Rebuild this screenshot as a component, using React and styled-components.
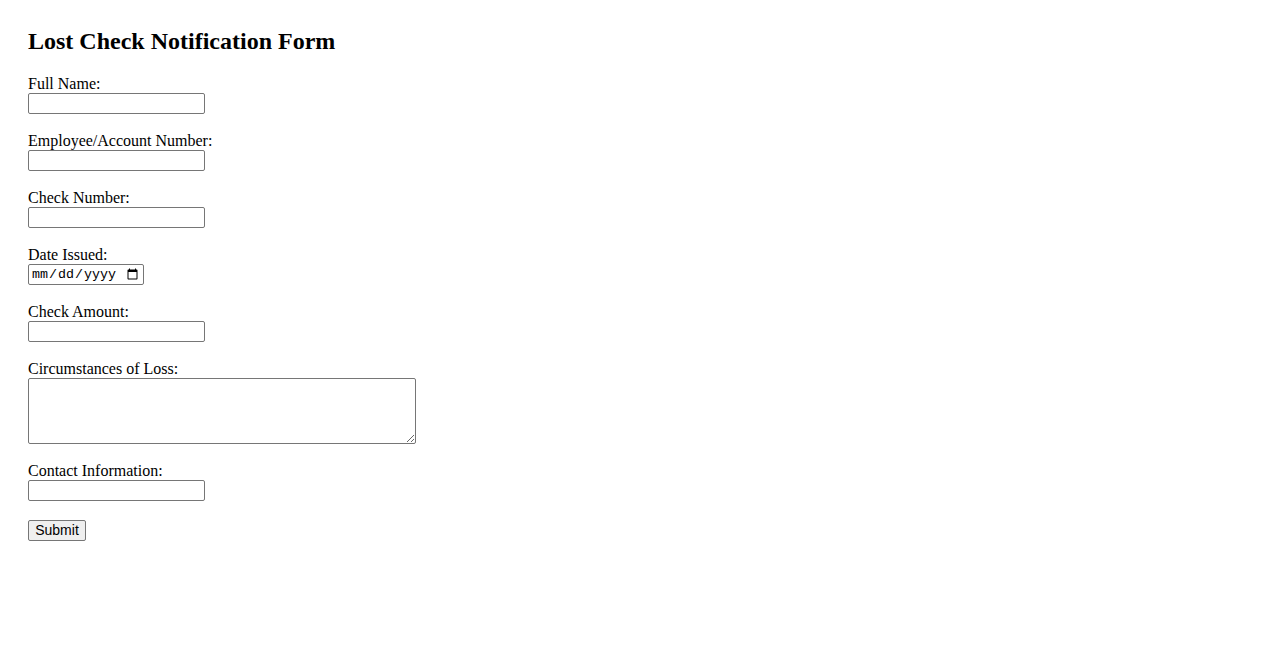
import React from 'react';
import styled, { createGlobalStyle } from 'styled-components';

const GlobalStyle = createGlobalStyle`
    body {
        margin: 8px;
        background: #ffffff;
        color: #000000;
        font-family: "Liberation Serif", "Times New Roman", serif;
        font-size: 16px;
    }
`;

const Page = styled.div`
    padding: 20px;
`;

const Title = styled.h2`
    margin: 0 0 19.92px;
    font-size: 24px;
    font-weight: 700;
    line-height: normal;
`;

const Form = styled.form`
    display: flex;
    flex-direction: column;
    align-items: flex-start;
`;

const Field = styled.div`
    display: flex;
    flex-direction: column;
    align-items: flex-start;
    margin-bottom: 18.1px;
`;

const Label = styled.label`
    display: block;
    line-height: normal;
`;

const TextInput = styled.input`
    box-sizing: border-box;
    width: ${p => p.$width || 177}px;
    height: 21px;
    margin: 0;
    padding: 1px 2px;
    border: 1px solid #767676;
    border-radius: 2px;
    background: #ffffff;
    font-family: ${p => (p.type === 'date' ? '"Liberation Mono", monospace' : '"Liberation Sans", Arial, sans-serif')};
    font-size: 13.33px;
    color: #000;
`;

const TextArea = styled.textarea`
    box-sizing: border-box;
    width: 388px;
    height: 66px;
    margin: 0;
    padding: 2px;
    border: 1px solid #767676;
    border-radius: 2px;
    font-family: "Liberation Mono", monospace;
    font-size: 13.33px;
    resize: both;
`;

const SubmitButton = styled.button`
    box-sizing: border-box;
    width: 58px;
    height: 21px;
    margin: 0;
    padding: 0 6px;
    border: 1px solid #767676;
    border-radius: 2px;
    background: #efefef;
    color: #000;
    font-family: "Liberation Sans", Arial, sans-serif;
    font-size: 14px;
    line-height: 18px;
`;

const fields = [
    { id: 'fullName', label: 'Full Name:' },
    { id: 'account', label: 'Employee/Account Number:' },
    { id: 'checkNumber', label: 'Check Number:' },
    { id: 'dateIssued', label: 'Date Issued:', type: 'date', width: 116 },
    { id: 'amount', label: 'Check Amount:' },
    { id: 'circumstances', label: 'Circumstances of Loss:', area: true },
    { id: 'contact', label: 'Contact Information:' },
];

export default function App() {
    return (
        <Page>
            <GlobalStyle />
            <Title>Lost Check Notification Form</Title>
            <Form onSubmit={e => e.preventDefault()}>
                {fields.map(f => (
                    <Field key={f.id}>
                        <Label htmlFor={f.id}>{f.label}</Label>
                        {f.area ? (
                            <TextArea id={f.id} />
                        ) : (
                            <TextInput id={f.id} type={f.type || 'text'} $width={f.width} />
                        )}
                    </Field>
                ))}
                <SubmitButton type="submit">Submit</SubmitButton>
            </Form>
        </Page>
    );
}
